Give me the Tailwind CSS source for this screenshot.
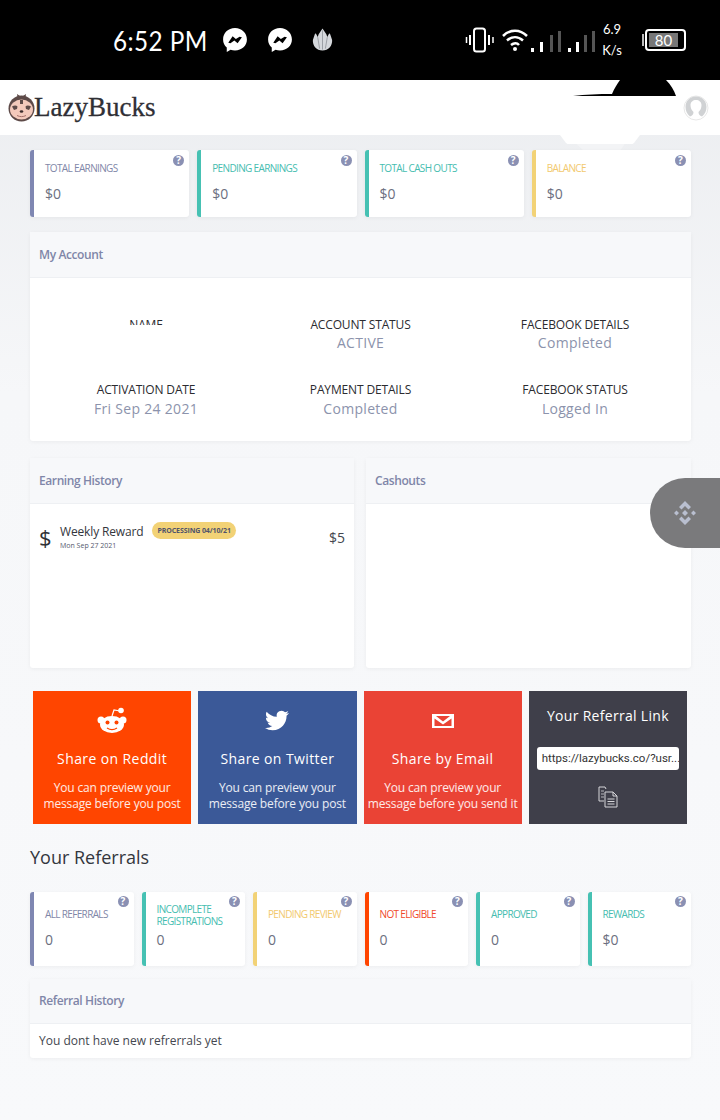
<!DOCTYPE html>
<html>
<head>
<meta charset="utf-8">
<script src="https://cdn.jsdelivr.net/npm/@tailwindcss/browser@4"></script>
</head>
<body class="m-0">
<div class="relative w-[720px] h-[1120px] overflow-hidden font-['Open_Sans',sans-serif] bg-linear-to-b from-[#e9ebee] via-[#f6f7f9] via-35% to-[#f8f9fb]">

  <!-- status bar -->
  <div class="h-[80px] bg-black text-white flex items-center pl-[113px]">
    <span class="font-['Lato',sans-serif] font-normal text-[27px] leading-none tracking-[0.5px] w-[110px] scale-x-90 origin-left mr-[-1px] whitespace-nowrap">6:52 PM</span>
    <svg class="w-[26px] h-[26px]" viewBox="0 0 24 24"><path fill="#fff" d="M12 1C5.600 1 1 5.600 1 11.500c0 3.100 1.300 5.700 3.400 7.500V23l3.500-2c1.300.4 2.600.6 4.100.6 6.400 0 11-4.500 11-10.100S18.400 1 12 1z"/><path fill="#000" d="M5.800 14.500l4-6 3 2.600 3.400-2.200 2.200.6-4 5.600-3-2.600-3.600 2.400z"/></svg>
    <svg class="w-[26px] h-[26px] ml-[19px]" viewBox="0 0 24 24"><path fill="#fff" d="M12 1C5.600 1 1 5.600 1 11.500c0 3.100 1.300 5.700 3.400 7.500V23l3.500-2c1.300.4 2.600.6 4.100.6 6.400 0 11-4.500 11-10.100S18.400 1 12 1z"/><path fill="#000" d="M5.800 14.500l4-6 3 2.600 3.400-2.200 2.200.6-4 5.600-3-2.600-3.600 2.400z"/></svg>
    <svg class="w-[25px] h-[26px] ml-[17px]" viewBox="0 0 26 26"><path fill="#d5d8dc" d="M13 1l4 6 1 3 2-4 1 1 2 6c.5 6-4 11-10 11S2.500 19 3 13l2-6 1-1 2 4 1-3 4-6z"/><path fill="none" stroke="#8b8f95" stroke-width=".8" d="M13 3v20M8 10l2 12M18 10l-2 12"/></svg>

    <svg class="w-[30px] h-[26px] ml-[130px]" viewBox="0 0 30 26" fill="none" stroke="#fff"><rect x="9" y="1.500" width="11" height="23" rx="2.500" stroke-width="2"/><path stroke-width="2" d="M5 8v10M24 8v10"/><path stroke-width="1.500" d="M1.500 10v6M28 10v6"/></svg>
    <svg class="w-[30px] h-[24px] ml-[6px]" viewBox="0 0 30 24" fill="none" stroke="#fff" stroke-width="2.500"><path d="M2 8c7-7 17-7 24 0M6 12.500c5-4.500 11-4.500 16 0M10 17c3-2.500 6-2.500 8 0"/><circle cx="14" cy="21" r="2" fill="#fff" stroke="none"/></svg>
    <svg class="w-[66px] h-[22px] mt-[2px] -ml-[1px]" viewBox="0 0 66 22"><rect x="1" y="18" width="3" height="4" fill="#fff"/><rect x="10" y="12" width="3" height="10" fill="#fff"/><rect x="20" y="5" width="3" height="17" fill="#555"/><rect x="28" y="1" width="3" height="21" fill="#555"/><rect x="38" y="18" width="3" height="4" fill="#fff"/><rect x="46" y="12" width="3" height="10" fill="#fff"/><rect x="54" y="5" width="3" height="17" fill="#555"/><rect x="62" y="1" width="3" height="21" fill="#555"/></svg>
    <div class="w-[22px] ml-[5px] text-[13px] leading-[21px] font-['Lato',sans-serif] text-center whitespace-nowrap"><div>6.9</div><div>K/s</div></div>
    <div class="ml-[19px] flex items-center">
      <span class="w-[2px] h-[12px] bg-[#bbb] mr-[1px]"></span>
      <div class="w-[41px] h-[22px] border-2 border-white rounded-[4px] p-[2px] flex">
        <div class="w-[29px] h-full bg-[#777] text-[15px] leading-[14px] text-center font-['Lato',sans-serif]">80</div>
      </div>
    </div>
  </div>

  <!-- header -->
  <header class="h-[55px] bg-white flex items-center pl-[8px] pr-[11px] justify-between">
    <div class="flex items-center">
      <svg class="w-[27px] h-[31px]" viewBox="0 0 27 31"><circle cx="13.500" cy="16.500" r="13" fill="#5d4a48"/><path fill="#5d4a48" d="M9 2l4.500 3L18 2l-1 7h-7z"/><ellipse cx="13.500" cy="17.500" rx="11.500" ry="10" fill="#f3c9bb"/><path fill="#5d4a48" d="M4 14.500c2-1.500 4.500-1.500 5.500 0L9 17l-3 1zM23 14.500c-2-1.500-4.500-1.500-5.500 0L18 17l3 1zM12 8h3v4h-3z"/><ellipse cx="13.500" cy="19.500" rx="1.800" ry="1.200" fill="#3a2b2a"/><path d="M9 23.500c3 1.500 6 1.500 9 0" stroke="#a5706a" fill="none"/></svg>
      <span class="font-['Liberation_Serif',serif] [-webkit-text-stroke:0.3px_#2f2f35] text-[27px] leading-none text-[#2f2f35] -ml-[1px]">LazyBucks</span>
    </div>
    <svg class="w-[26px] h-[26px]" viewBox="0 0 26 26"><circle cx="13" cy="13" r="12" fill="#fff" stroke="#e8e8e8"/><path fill="#d0d2d4" d="M13 1.500c-6 0-10.500 4.500-10.500 10.500 0 4 1.500 7 4.500 9.500 2.500-1 3.500-2.500 3.500-4.500-2-2-3-4-3-7 0-3 2.500-5 5.500-5s5.500 2 5.500 5c0 3-1 5-3 7 0 2 1 3.500 3.500 4.500 3-2.500 4.500-5.500 4.500-9.500 0-6-4.500-10.500-10.500-10.500z"/></svg>
  </header>

  <!-- artefacts over the header -->
  <svg class="absolute left-[560px] top-[80px] w-[130px] h-[75px]" viewBox="0 0 130 75"><path fill="#000" d="M60 0H106C111 5 114 10 116 16H13c12-1.500 26-2 39-2 2-5 5-10 8-14z"/><path fill="#f3f4f6" d="M14 62H66L60 71H24z"/><path fill="#fff" d="M0 55H80L74 63c-1 1-2 1-3 1H9c-1 0-2 0-3-1z"/></svg>

  <main class="pl-[30px] pr-[29px] pt-[15px]">
    <!-- stats -->
    <section class="grid grid-cols-4 gap-[8px]">
      <div class="relative h-[67px] bg-white rounded-[3px] border-l-4 border-[#7f87b2] pl-[11px] pt-[11px] shadow-[0_1px_4px_rgba(0,0,0,0.05)]">
        <span class="absolute top-[5px] right-[5px] w-[11px] h-[11px] rounded-full bg-[#8a90b3] text-white text-[10px] leading-[11px] font-bold text-center">?</span>
        <div class="text-[10px] leading-[14px] tracking-[-0.65px] text-[#7f87a8]">TOTAL EARNINGS</div>
        <div class="text-[14px] leading-[20px] mt-[9px] text-[#6c6f80]">$0</div>
      </div>
      <div class="relative h-[67px] bg-white rounded-[3px] border-l-4 border-[#46c1b3] pl-[11px] pt-[11px] shadow-[0_1px_4px_rgba(0,0,0,0.05)]">
        <span class="absolute top-[5px] right-[5px] w-[11px] h-[11px] rounded-full bg-[#8a90b3] text-white text-[10px] leading-[11px] font-bold text-center">?</span>
        <div class="text-[10px] leading-[14px] tracking-[-0.65px] text-[#46bdb0]">PENDING EARNINGS</div>
        <div class="text-[14px] leading-[20px] mt-[9px] text-[#6c6f80]">$0</div>
      </div>
      <div class="relative h-[67px] bg-white rounded-[3px] border-l-4 border-[#46c1b3] pl-[11px] pt-[11px] shadow-[0_1px_4px_rgba(0,0,0,0.05)]">
        <span class="absolute top-[5px] right-[5px] w-[11px] h-[11px] rounded-full bg-[#8a90b3] text-white text-[10px] leading-[11px] font-bold text-center">?</span>
        <div class="text-[10px] leading-[14px] tracking-[-0.65px] text-[#46bdb0]">TOTAL CASH OUTS</div>
        <div class="text-[14px] leading-[20px] mt-[9px] text-[#6c6f80]">$0</div>
      </div>
      <div class="relative h-[67px] bg-white rounded-[3px] border-l-4 border-[#f2d276] pl-[11px] pt-[11px] shadow-[0_1px_4px_rgba(0,0,0,0.05)]">
        <span class="absolute top-[5px] right-[5px] w-[11px] h-[11px] rounded-full bg-[#8a90b3] text-white text-[10px] leading-[11px] font-bold text-center">?</span>
        <div class="text-[10px] leading-[14px] tracking-[-0.65px] text-[#f2c96e]">BALANCE</div>
        <div class="text-[14px] leading-[20px] mt-[9px] text-[#6c6f80]">$0</div>
      </div>
    </section>

    <!-- account -->
    <section class="mt-[15px] h-[209px] bg-white rounded-[3px] shadow-[0_1px_4px_rgba(0,0,0,0.05)]">
      <div class="h-[46px] bg-[#f7f8fa] border-b border-[#eef0f3] pl-[9px] flex items-center text-[12px] font-semibold tracking-[-0.4px] text-[#7f86a8]">My Account</div>
      <div class="grid grid-cols-[232px_197px_232px] pt-[38px]">
        <div class="h-[65px] text-center">
          <div class="h-[9px] overflow-hidden text-[12px] leading-[17px] font-medium text-[#2b2b30] tracking-[-0.15px]">NAME</div>
        </div>
        <div class="h-[65px] text-center">
          <div class="text-[12px] leading-[17px] font-medium text-[#2b2b30] tracking-[-0.15px]">ACCOUNT STATUS</div>
          <div class="text-[14px] leading-[20px] tracking-[0.3px] text-[#8c93ac]">ACTIVE</div>
        </div>
        <div class="h-[65px] text-center">
          <div class="text-[12px] leading-[17px] font-medium text-[#2b2b30] tracking-[-0.15px]">FACEBOOK DETAILS</div>
          <div class="text-[14px] leading-[20px] tracking-[0.3px] text-[#8c93ac]">Completed</div>
        </div>
        <div class="text-center">
          <div class="text-[12px] leading-[17px] font-medium text-[#2b2b30] tracking-[-0.15px]">ACTIVATION DATE</div>
          <div class="mt-[1px] text-[14px] leading-[20px] tracking-[0.3px] text-[#8c93ac]">Fri Sep 24 2021</div>
        </div>
        <div class="text-center">
          <div class="text-[12px] leading-[17px] font-medium text-[#2b2b30] tracking-[-0.15px]">PAYMENT DETAILS</div>
          <div class="mt-[1px] text-[14px] leading-[20px] tracking-[0.3px] text-[#8c93ac]">Completed</div>
        </div>
        <div class="text-center">
          <div class="text-[12px] leading-[17px] font-medium text-[#2b2b30] tracking-[-0.15px]">FACEBOOK STATUS</div>
          <div class="mt-[1px] text-[14px] leading-[20px] tracking-[0.3px] text-[#8c93ac]">Logged In</div>
        </div>
      </div>
    </section>

    <!-- history -->
    <section class="mt-[17px] grid grid-cols-[324px_325px] gap-[12px]">
      <div class="h-[210px] bg-white rounded-[3px] shadow-[0_1px_4px_rgba(0,0,0,0.05)]">
        <div class="h-[46px] bg-[#f7f8fa] border-b border-[#eef0f3] pl-[9px] flex items-center text-[12px] font-semibold tracking-[-0.4px] text-[#7f86a8]">Earning History</div>
        <div class="flex items-center pl-[9px] pr-[9px] pt-[18px]">
          <span class="w-[21px] text-[22px] leading-[30px] text-[#2f3136]">$</span>
          <div>
            <div class="text-[12px] leading-[16px] tracking-[-0.15px] text-[#33363d] whitespace-nowrap">Weekly Reward</div>
            <div class="text-[7px] leading-[11px] text-[#555a6e]">Mon Sep 27 2021</div>
          </div>
          <span class="self-start ml-[9px] h-[17px] px-[5px] rounded-full bg-[#f2d276] text-[7px] font-bold leading-[17px] text-[#50536b] tracking-[-0.1px] whitespace-nowrap">PROCESSING 04/10/21</span>
          <span class="ml-auto text-[14px] text-[#44474f]">$5</span>
        </div>
      </div>
      <div class="h-[210px] bg-white rounded-[3px] shadow-[0_1px_4px_rgba(0,0,0,0.05)]">
        <div class="h-[46px] bg-[#f7f8fa] border-b border-[#eef0f3] pl-[9px] flex items-center text-[12px] font-semibold tracking-[-0.4px] text-[#7f86a8]">Cashouts</div>
      </div>
    </section>

    <!-- share -->
    <section class="mt-[23px] ml-[3px] mr-[4px] grid grid-cols-4 gap-[7px] h-[133px] text-white text-center">
      <div class="bg-[#ff4500] flex flex-col items-center pt-[16px]">
        <svg class="w-[32px] h-[27px]" viewBox="0 0 32 27"><ellipse cx="16" cy="17.500" rx="12" ry="8.500" fill="#fff"/><circle cx="5" cy="13" r="3.500" fill="#fff"/><circle cx="27" cy="13" r="3.500" fill="#fff"/><circle cx="25" cy="3.500" r="2.800" fill="#fff"/><path d="M16 9l2-6 6 1" stroke="#fff" stroke-width="1.200" fill="none"/><circle cx="11.500" cy="15.500" r="2" fill="#ff4500"/><circle cx="20.500" cy="15.500" r="2" fill="#ff4500"/><path d="M11 21c3 2 7 2 10 0" stroke="#ff4500" stroke-width="1.200" fill="none"/></svg>
        <div class="text-[14px] leading-[20px] mt-[15px] tracking-[0.4px]">Share on Reddit</div>
        <div class="text-[12px] leading-[16px] mt-[11px] tracking-[-0.15px] text-white/90 whitespace-nowrap">You can preview your<br>message before you post</div>
      </div>
      <div class="bg-[#3b5998] flex flex-col items-center pt-[16px]">
        <svg class="w-[24px] h-[27px]" viewBox="0 0 24 24"><path fill="#fff" d="M23.953 4.570a10 10 0 01-2.825.775 4.958 4.958 0 002.163-2.723c-.951.555-2.005.959-3.127 1.184a4.920 4.920 0 00-8.384 4.482C7.690 8.095 4.067 6.130 1.640 3.162a4.822 4.822 0 00-.666 2.475c0 1.710.870 3.213 2.188 4.096a4.904 4.904 0 01-2.228-.616v.060a4.923 4.923 0 003.946 4.827 4.996 4.996 0 01-2.212.085 4.936 4.936 0 004.604 3.417 9.867 9.867 0 01-6.102 2.105c-.390 0-.779-.023-1.170-.067a13.995 13.995 0 007.557 2.209c9.053 0 13.998-7.496 13.998-13.985 0-.210 0-.420-.015-.630A9.935 9.935 0 0024 4.590z"/></svg>
        <div class="text-[14px] leading-[20px] mt-[15px] tracking-[0.4px]">Share on Twitter</div>
        <div class="text-[12px] leading-[16px] mt-[11px] tracking-[-0.15px] text-white/90 whitespace-nowrap">You can preview your<br>message before you post</div>
      </div>
      <div class="bg-[#ea4335] flex flex-col items-center pt-[16px]">
        <svg class="w-[24px] h-[27px]" viewBox="0 0 24 27"><path fill-rule="evenodd" fill="#fff" d="M1 7h22v14H1zM3.500 11.500V19h17v-7.500L12 17.500zM5 9l7 5.500L19 9z"/></svg>
        <div class="text-[14px] leading-[20px] mt-[15px] tracking-[0.4px]">Share by Email</div>
        <div class="text-[12px] leading-[16px] mt-[11px] tracking-[-0.15px] text-white/90 whitespace-nowrap">You can preview your<br>message before you send it</div>
      </div>
      <div class="bg-[#3f3f4a] flex flex-col items-center pt-[15px] px-[8px]">
        <div class="text-[14px] leading-[20px] tracking-[0.3px]">Your Referral Link</div>
        <div class="mt-[21px] w-full h-[23px] bg-white rounded-[3px] text-[#333] text-[11.500px] leading-[23px] font-['Roboto',sans-serif] text-left pl-[5px] whitespace-nowrap overflow-hidden">https://lazybucks.co/?usr...</div>
        <svg class="mt-[16px] w-[22px] h-[22px]" viewBox="0 0 22 22" fill="none" stroke="#d6d6d9"><path d="M9 3l-1-2H2v14h5"/><path d="M4 5h3M4 8h3M4 11h3" stroke-width=".8"/><path d="M8 6h8l4 4v11H8z" fill="#3f3f4a"/><path d="M16 6v4h4"/><path d="M10.500 13h7M10.500 15.500h7M10.500 18h7"/></svg>
      </div>
    </section>

    <h2 class="mt-[20px] text-[18px] leading-[26px] text-[#33363d] font-normal">Your Referrals</h2>

    <!-- referrals -->
    <section class="mt-[22px] grid grid-cols-6 gap-[8px]">
      <div class="relative h-[74px] bg-white rounded-[3px] border-l-4 border-[#7f87b2] pl-[11px] shadow-[0_1px_4px_rgba(0,0,0,0.05)]">
        <span class="absolute top-[4px] right-[5px] w-[11px] h-[11px] rounded-full bg-[#8a90b3] text-white text-[10px] leading-[11px] font-bold text-center">?</span>
        <div class="h-[33px] mt-[5px] flex items-center text-[10px] leading-[12px] tracking-[-0.65px] text-[#7f87a8]">ALL REFERRALS</div>
        <div class="text-[14px] leading-[20px] text-[#6c6f80]">0</div>
      </div>
      <div class="relative h-[74px] bg-white rounded-[3px] border-l-4 border-[#46c1b3] pl-[11px] shadow-[0_1px_4px_rgba(0,0,0,0.05)]">
        <span class="absolute top-[4px] right-[5px] w-[11px] h-[11px] rounded-full bg-[#8a90b3] text-white text-[10px] leading-[11px] font-bold text-center">?</span>
        <div class="h-[31px] mt-[7px] flex items-center text-[10px] leading-[12px] tracking-[-0.65px] text-[#46bdb0]">INCOMPLETE REGISTRATIONS</div>
        <div class="text-[14px] leading-[20px] text-[#6c6f80]">0</div>
      </div>
      <div class="relative h-[74px] bg-white rounded-[3px] border-l-4 border-[#f2d276] pl-[11px] shadow-[0_1px_4px_rgba(0,0,0,0.05)]">
        <span class="absolute top-[4px] right-[5px] w-[11px] h-[11px] rounded-full bg-[#8a90b3] text-white text-[10px] leading-[11px] font-bold text-center">?</span>
        <div class="h-[33px] mt-[5px] flex items-center text-[10px] leading-[12px] tracking-[-0.65px] text-[#f2c96e]">PENDING REVIEW</div>
        <div class="text-[14px] leading-[20px] text-[#6c6f80]">0</div>
      </div>
      <div class="relative h-[74px] bg-white rounded-[3px] border-l-4 border-[#ff4500] pl-[11px] shadow-[0_1px_4px_rgba(0,0,0,0.05)]">
        <span class="absolute top-[4px] right-[5px] w-[11px] h-[11px] rounded-full bg-[#8a90b3] text-white text-[10px] leading-[11px] font-bold text-center">?</span>
        <div class="h-[33px] mt-[5px] flex items-center text-[10px] leading-[12px] tracking-[-0.65px] text-[#f0492a]">NOT ELIGIBLE</div>
        <div class="text-[14px] leading-[20px] text-[#6c6f80]">0</div>
      </div>
      <div class="relative h-[74px] bg-white rounded-[3px] border-l-4 border-[#46c1b3] pl-[11px] shadow-[0_1px_4px_rgba(0,0,0,0.05)]">
        <span class="absolute top-[4px] right-[5px] w-[11px] h-[11px] rounded-full bg-[#8a90b3] text-white text-[10px] leading-[11px] font-bold text-center">?</span>
        <div class="h-[33px] mt-[5px] flex items-center text-[10px] leading-[12px] tracking-[-0.65px] text-[#46bdb0]">APPROVED</div>
        <div class="text-[14px] leading-[20px] text-[#6c6f80]">0</div>
      </div>
      <div class="relative h-[74px] bg-white rounded-[3px] border-l-4 border-[#46c1b3] pl-[11px] shadow-[0_1px_4px_rgba(0,0,0,0.05)]">
        <span class="absolute top-[4px] right-[5px] w-[11px] h-[11px] rounded-full bg-[#8a90b3] text-white text-[10px] leading-[11px] font-bold text-center">?</span>
        <div class="h-[33px] mt-[5px] flex items-center text-[10px] leading-[12px] tracking-[-0.65px] text-[#46bdb0]">REWARDS</div>
        <div class="text-[14px] leading-[20px] text-[#6c6f80]">$0</div>
      </div>
    </section>

    <section class="mt-[13px] h-[79px] bg-white rounded-[3px] shadow-[0_1px_4px_rgba(0,0,0,0.05)]">
      <div class="h-[45px] bg-[#f7f8fa] border-b border-[#eef0f3] pl-[9px] flex items-center text-[12px] font-semibold tracking-[-0.4px] text-[#7f86a8]">Referral History</div>
      <div class="pl-[9px] pt-[8px] text-[12px] leading-[18px] text-[#44474f]">You dont have new refrerrals yet</div>
    </section>
  </main>

  <!-- floating button -->
  <div class="absolute left-[650px] top-[478px] w-[70px] h-[70px] rounded-l-full bg-[#7a7a7c] flex items-center pl-[21px]">
    <svg class="w-[28px] h-[28px]" viewBox="0 0 28 28" fill="#b9bfd0"><path d="M14 2l6 6-2.500 2.500L14 7l-3.500 3.500L8 8zM14 26l-6-6 2.500-2.500L14 21l3.500-3.500L20 20zM3 14l2.500-2.500L8 14l-2.500 2.500zM20 14l2.500-2.500L25 14l-2.500 2.500zM14 11l3 3-3 3-3-3z"/></svg>
  </div>
</div>
</body>
</html>
